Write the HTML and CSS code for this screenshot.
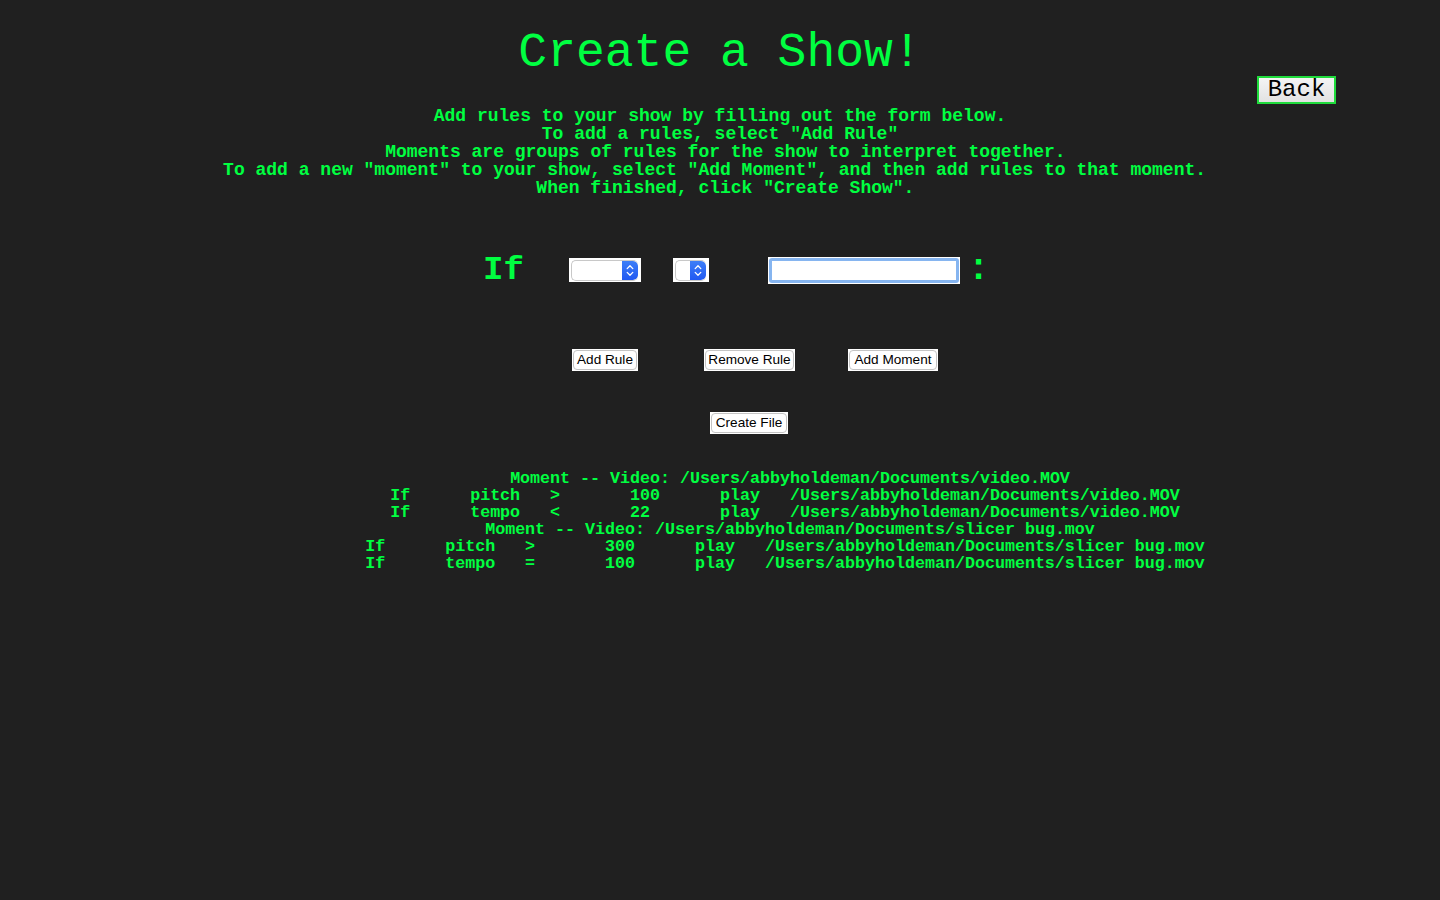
FILE: index.html
```html
<!DOCTYPE html>
<html lang="en">
<head>
<meta charset="utf-8">
<title>Create a Show!</title>
<link rel="stylesheet" href="styles.css">
</head>
<body>
<h1 class="title">Create a Show!</h1>
<div class="back-row"><button class="back-btn" type="button">Back</button></div>
<div class="intro">
<div class="intro-line">Add rules to your show by filling out the form below.</div>
<div class="intro-line">To add a rules, select "Add Rule"</div>
<div class="intro-line"> Moments are groups of rules for the show to interpret together.</div>
<div class="intro-line">To add a new "moment" to your show, select "Add Moment", and then add rules to that moment. </div>
<div class="intro-line"> When finished, click "Create Show".</div>
</div>
<div class="rule-row">
  <span class="big-label">If</span>
  <span class="fake-select sel-wide">
    <span class="sel-inner">
      <span class="sel-field"></span>
      <span class="sel-arrows"><svg width="16" height="21" viewBox="0 0 16 21"><path d="M5.2 8.6 L8 5.8 L10.8 8.6 M5.2 12.4 L8 15.2 L10.8 12.4" fill="none" stroke="#fff" stroke-width="1.3" stroke-linecap="round" stroke-linejoin="round"/></svg></span>
    </span>
  </span>
  <span class="fake-select sel-narrow">
    <span class="sel-inner">
      <span class="sel-field"></span>
      <span class="sel-arrows"><svg width="16" height="21" viewBox="0 0 16 21"><path d="M5.2 8.6 L8 5.8 L10.8 8.6 M5.2 12.4 L8 15.2 L10.8 12.4" fill="none" stroke="#fff" stroke-width="1.3" stroke-linecap="round" stroke-linejoin="round"/></svg></span>
    </span>
  </span>
  <span class="input-wrap"><input class="value-input" type="text" aria-label="value"></span>
  <span class="big-label colon">:</span>
</div>
<div class="btn-row btn-row-main">
  <button class="form-btn w-add-rule" type="button">Add Rule</button>
  <button class="form-btn w-remove-rule" type="button">Remove Rule</button>
  <button class="form-btn w-add-moment" type="button">Add Moment</button>
</div>
<div class="btn-row btn-row-create">
  <button class="form-btn w-create" type="button">Create File</button>
</div>
<div class="moments">
<div class="m-line">Moment -- Video: /Users/abbyholdeman/Documents/video.MOV</div>
<div class="m-line">If      pitch   >       100      play   /Users/abbyholdeman/Documents/video.MOV </div>
<div class="m-line">If      tempo   &lt;       22       play   /Users/abbyholdeman/Documents/video.MOV </div>
<div class="m-line">Moment -- Video: /Users/abbyholdeman/Documents/slicer bug.mov</div>
<div class="m-line">If      pitch   >       300      play   /Users/abbyholdeman/Documents/slicer bug.mov </div>
<div class="m-line">If      tempo   =       100      play   /Users/abbyholdeman/Documents/slicer bug.mov </div>
</div>
</body>
</html>
```
FILE: styles.css
```css
html, body {
  margin: 0;
  padding: 0;
}
body {
  background: #202020;
  color: #00ff41;
  font-family: "Liberation Mono", "Courier New", monospace;
  min-height: 900px;
}
.title {
  margin: 26px 0 0;
  font-size: 48px;
  line-height: 54px;
  font-weight: normal;
  text-align: center;
}
.back-row {
  display: flex;
  justify-content: flex-end;
  margin-top: -4px;
  padding-right: 104px;
}
.back-btn {
  font-family: "Liberation Mono", "Courier New", monospace;
  font-size: 24px;
  line-height: 24px;
  height: 28px;
  width: 79px;
  padding: 0;
  color: #000;
  border: 2px solid #1fdc3c;
  border-radius: 0;
  background: linear-gradient(#f4f4f4, #e2e2e2);
}
.intro {
  margin-top: 2.5px;
  font-size: 18px;
  line-height: 18px;
  font-weight: bold;
  text-align: center;
}
.intro-line {
  white-space: pre;
}
.rule-row {
  display: flex;
  align-items: center;
  height: 28px;
  margin-top: 59.5px;
  padding-left: 483px;
}
.big-label {
  font-size: 34px;
  line-height: 28px;
  font-weight: bold;
}
.fake-select {
  display: flex;
  box-sizing: border-box;
  height: 24px;
  padding: 2px 3px 1px 2px;
  background: #fff;
  margin-left: 45px;
}
.sel-wide { width: 72px; }
.sel-narrow { width: 36px; margin-left: 32px; }
.sel-inner {
  flex: 1;
  display: flex;
  border: 1px solid #c8c8c8;
  border-right: none;
  border-radius: 5px;
  overflow: hidden;
  background: #fff;
}
.sel-field {
  flex: 1;
}
.sel-arrows {
  display: flex;
  width: 16px;
  background: linear-gradient(#3d7ef7, #2159f2);
  border-radius: 0 5px 5px 0;
}
.sel-arrows svg {
  display: block;
  margin-top: -1px;
}
.input-wrap {
  display: block;
  box-sizing: border-box;
  width: 192px;
  height: 27px;
  padding: 1px;
  margin-left: 59px;
  background: #fff;
}
.value-input {
  display: block;
  box-sizing: border-box;
  width: 100%;
  height: 100%;
  margin: 0;
  padding: 0 3px;
  border: 3px solid #86b5f0;
  border-radius: 3px;
  background: #fff;
  outline: none;
}
.colon {
  font-size: 36px;
  margin-left: 8px;
}
.btn-row {
  display: flex;
  align-items: flex-start;
}
.btn-row-main {
  margin-top: 65px;
  padding-left: 572px;
}
.btn-row-create {
  margin-top: 41px;
  padding-left: 710px;
}
.form-btn {
  position: relative;
  box-sizing: border-box;
  height: 22px;
  padding: 0;
  margin: 0;
  font-family: "Liberation Sans", Arial, sans-serif;
  font-size: 13.6px;
  line-height: 20px;
  color: #000;
  background: #fff;
  border: 1px solid #fff;
  border-radius: 0;
  text-align: center;
}
.form-btn::after {
  content: "";
  position: absolute;
  inset: 0;
  border: 1px solid #c4c4c4;
  border-radius: 4px;
}
.w-add-rule { width: 66px; }
.w-remove-rule { width: 91px; margin-left: 66px; }
.w-add-moment { width: 90px; margin-left: 53px; }
.w-create { width: 78px; }
.moments {
  margin-top: 36.4px;
  margin-left: 140px;
  width: 1300px;
  font-size: 16.667px;
  line-height: 17px;
  font-weight: bold;
  text-align: center;
}
.m-line {
  white-space: pre;
}
```
